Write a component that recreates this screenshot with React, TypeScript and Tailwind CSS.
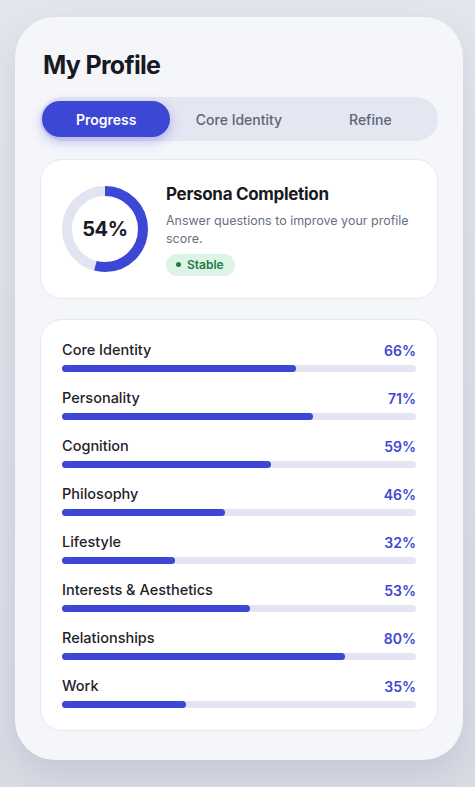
import { useState } from 'react';

const sections = [
  { name: 'Core Identity', value: 66 },
  { name: 'Personality', value: 71 },
  { name: 'Cognition', value: 59 },
  { name: 'Philosophy', value: 46 },
  { name: 'Lifestyle', value: 32 },
  { name: 'Interests & Aesthetics', value: 53 },
  { name: 'Relationships', value: 80 },
  { name: 'Work', value: 35 },
];

const tabs = ['Progress', 'Core Identity', 'Refine'];

function Donut({ value }: { value: number }) {
  const r = 38;
  const c = 2 * Math.PI * r;
  return (
    <div className="relative w-[86px] h-[86px] shrink-0">
      <svg width="86" height="86" viewBox="0 0 86 86" className="-rotate-90">
        <circle cx="43" cy="43" r={r} fill="none" stroke="#e2e4f1" strokeWidth="10" />
        <circle
          cx="43"
          cy="43"
          r={r}
          fill="none"
          stroke="#3d47d5"
          strokeWidth="10"
          strokeDasharray={`${(c * value) / 100} ${c}`}
        />
      </svg>
      <div className="absolute inset-0 flex items-center justify-center text-[20px] font-bold text-[#181a24] tracking-[-0.3px]">
        {value}%
      </div>
    </div>
  );
}

function SectionRow({ name, value }: { name: string; value: number }) {
  return (
    <div className="flex flex-col gap-[5px]">
      <div className="flex items-center justify-between h-5">
        <span className="text-[14.5px] font-medium text-[#1f212c]">{name}</span>
        <span className="text-[14px] font-semibold text-[#3d47d5]">{value}%</span>
      </div>
      <div className="h-[7px] w-full rounded-full bg-[#e3e5f2]">
        <div className="h-full rounded-full bg-[#3d47d5]" style={{ width: `${value}%` }} />
      </div>
    </div>
  );
}

export default function App() {
  const [active, setActive] = useState('Progress');

  return (
    <div
      className="min-h-screen bg-gradient-to-b from-[#e4e6ee] to-[#d9dbe4] pt-[17px] pb-[27px]"
      style={{ fontFamily: 'Inter, "Noto Sans", sans-serif' }}
    >
      <div className="ml-[15px] w-[448px] rounded-[40px] bg-[#f5f6fa] px-[25px] pt-8 pb-[29px] shadow-[0_14px_30px_rgba(140,145,170,0.25)]">
        <h1 className="text-[25px] leading-8 font-bold text-[#171923] tracking-[-0.7px] pl-[3px]">My Profile</h1>

        {/* Tab switcher */}
        <div className="mt-4 grid grid-cols-3 h-11 rounded-full bg-[#e4e6f2] px-[2px] py-1">
          {tabs.map((tab) => (
            <button
              key={tab}
              onClick={() => setActive(tab)}
              className={
                active === tab
                  ? 'rounded-full bg-[#3d47d5] text-white text-[14px] font-semibold shadow-[0_4px_12px_rgba(61,71,213,0.35)] mr-[3px]'
                  : 'rounded-full text-[#5f6477] text-[14px] font-medium'
              }
            >
              {tab}
            </button>
          ))}
        </div>

        {/* Completion summary */}
        <div className="mt-[18px] flex items-center gap-[18px] h-[140px] rounded-[22px] border border-[#e6e8f2] bg-white px-[21px]">
          <Donut value={54} />
          <div className="flex flex-col">
            <h2 className="text-[17px] leading-[22px] font-bold text-[#171923] tracking-[-0.3px]">Persona Completion</h2>
            <p className="mt-[7px] text-[12.5px] leading-[18px] text-[#6b7082]">
              Answer questions to improve your profile score.
            </p>
            <div className="mt-[6px] self-start flex items-center gap-[6px] h-[22px] rounded-full bg-[#ddf3e5] pl-[10px] pr-[11px]">
              <span className="w-[5px] h-[5px] rounded-full bg-[#1e7d45]" />
              <span className="text-[12px] font-semibold text-[#1e7d45]">Stable</span>
            </div>
          </div>
        </div>

        {/* Section breakdown */}
        <div className="mt-[20px] flex flex-col gap-4 rounded-[22px] border border-[#e6e8f2] bg-white px-[21px] pt-[20px] pb-[22px]">
          {sections.map((s) => (
            <SectionRow key={s.name} name={s.name} value={s.value} />
          ))}
        </div>
      </div>
    </div>
  );
}
